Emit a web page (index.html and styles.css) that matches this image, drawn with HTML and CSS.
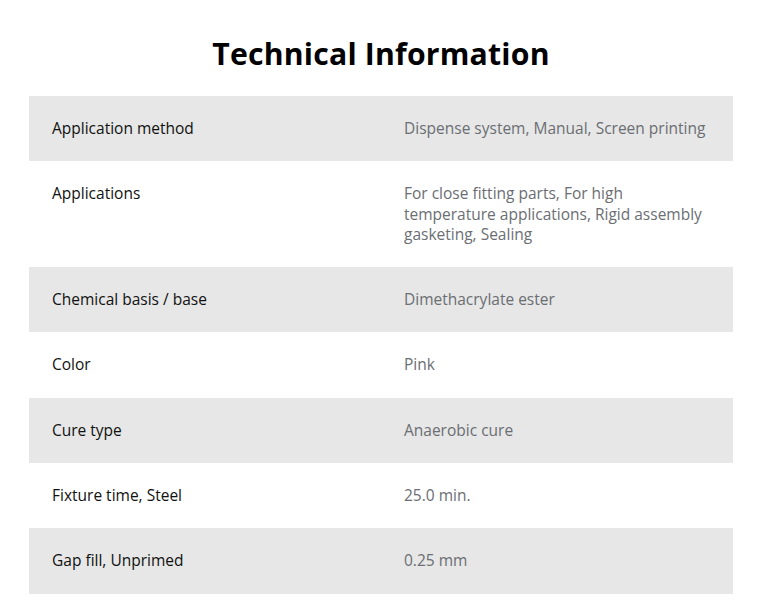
FILE: index.html
```html
<!DOCTYPE html>
<html lang="en">
<head>
<meta charset="utf-8">
<title>Technical Information</title>
<link rel="stylesheet" href="styles.css">
</head>
<body>
<section class="tech">
  <h2 class="tech-title">Technical Information</h2>
  <div class="tech-table">
    <div class="row shaded"><div class="label">Application method</div><div class="value">Dispense system, Manual, Screen printing</div></div>
    <div class="row"><div class="label">Applications</div><div class="value">For close fitting parts, For high temperature applications, Rigid assembly gasketing, Sealing</div></div>
    <div class="row shaded"><div class="label">Chemical basis / base</div><div class="value">Dimethacrylate ester</div></div>
    <div class="row"><div class="label">Color</div><div class="value">Pink</div></div>
    <div class="row shaded"><div class="label">Cure type</div><div class="value">Anaerobic cure</div></div>
    <div class="row"><div class="label">Fixture time, Steel</div><div class="value">25.0 min.</div></div>
    <div class="row shaded"><div class="label">Gap fill, Unprimed</div><div class="value">0.25 mm</div></div>
  </div>
</section>
</body>
</html>
```
FILE: styles.css
```css
html, body {
  margin: 0;
  padding: 0;
  background: #ffffff;
}
body {
  font-family: "Open Sans", "Noto Sans", sans-serif;
  color: #000;
}
.tech {
  padding: 30px 26px 0 29px;
}
.tech-title {
  margin: 0 0 19px;
  text-align: center;
  font-size: 30.2px;
  line-height: 47px;
  font-weight: 700;
  letter-spacing: 0.2px;
}
.tech-table {
  display: flex;
  flex-direction: column;
}
.row {
  display: grid;
  grid-template-columns: 352px 1fr;
  padding: 22px 23px 23px;
  font-size: 15.5px;
  line-height: 20.3px;
}
.row.shaded {
  background: #e6e7e6;
}
.label {
  color: #111;
}
.value {
  color: #6b6e73;
  padding-right: 4px;
}
```
